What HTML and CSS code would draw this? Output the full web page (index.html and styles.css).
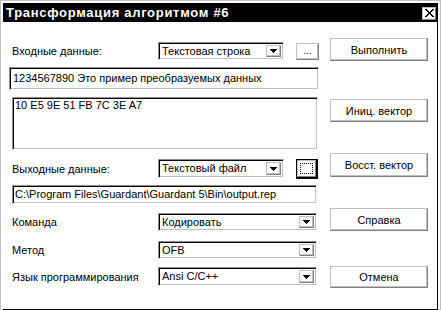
FILE: index.html
```html
<!DOCTYPE html>
<html lang="ru">
<head>
<meta charset="utf-8">
<title>Трансформация алгоритмом #6</title>
<link rel="stylesheet" href="styles.css">
</head>
<body>
<div class="window">
  <div class="frame">
    <div class="titlebar">
      <span class="title">Трансформация алгоритмом #6</span>
      <span class="close"><svg width="9" height="8" viewBox="0 0 9 8"><path d="M0 0h2v1h1v1h1v1h1V2h1V1h1V0h2v1H8v1H7v1H6v2h1v1h1v1h1v1H7V7H6V6H5V5H4v1H3v1H2v1H0V7h1V6h1V5h1V3H2V2H1V1H0z" fill="#000"/></svg></span>
    </div>
    <div class="client">
      <div class="left">
        <div class="row r1">
          <span class="label">Входные данные:</span>
          <div class="combo c-short"><span class="ctext">Текстовая строка</span><span class="arrow"><svg width="7" height="4" viewBox="0 0 7 4"><path d="M0 0h7v1H0zM1 1h5v1H1zM2 2h3v1H2zM3 3h1v1H3z" fill="#000"/></svg></span></div>
          <span class="btn small">...</span>
        </div>
        <div class="field f-in">1234567890 Это пример преобразуемых данных</div>
        <div class="field f-area">10 E5 9E 51 FB 7C 3E A7</div>
        <div class="row r2">
          <span class="label">Выходные данные:</span>
          <div class="combo c-short"><span class="ctext">Текстовый файл</span><span class="arrow"><svg width="7" height="4" viewBox="0 0 7 4"><path d="M0 0h7v1H0zM1 1h5v1H1zM2 2h3v1H2zM3 3h1v1H3z" fill="#000"/></svg></span></div>
          <span class="btn small focus"><span class="dots"></span></span>
        </div>
        <div class="field f-out">C:\Program Files\Guardant\Guardant 5\Bin\output.rep</div>
        <div class="row r3">
          <span class="label">Команда</span>
          <div class="combo c-long"><span class="ctext">Кодировать</span><span class="arrow"><svg width="7" height="4" viewBox="0 0 7 4"><path d="M0 0h7v1H0zM1 1h5v1H1zM2 2h3v1H2zM3 3h1v1H3z" fill="#000"/></svg></span></div>
        </div>
        <div class="row r4">
          <span class="label">Метод</span>
          <div class="combo c-long"><span class="ctext">OFB</span><span class="arrow"><svg width="7" height="4" viewBox="0 0 7 4"><path d="M0 0h7v1H0zM1 1h5v1H1zM2 2h3v1H2zM3 3h1v1H3z" fill="#000"/></svg></span></div>
        </div>
        <div class="row r5">
          <span class="label">Язык программирования</span>
          <div class="combo c-long"><span class="ctext">Ansi C/C++</span><span class="arrow"><svg width="7" height="4" viewBox="0 0 7 4"><path d="M0 0h7v1H0zM1 1h5v1H1zM2 2h3v1H2zM3 3h1v1H3z" fill="#000"/></svg></span></div>
        </div>
      </div>
      <div class="right">
        <span class="btn big b1">Выполнить</span>
        <span class="btn big b2">Иниц. вектор</span>
        <span class="btn big b3">Восст. вектор</span>
        <span class="btn big b4">Справка</span>
        <span class="btn big b5">Отмена</span>
      </div>
    </div>
  </div>
</div>
</body>
</html>
```

FILE: styles.css
```css
* { box-sizing: border-box; }
html, body { margin: 0; padding: 0; background: #fff; }
body {
  font-family: "Liberation Sans", Arial, sans-serif;
  font-size: 11px;
  color: #000;
}
.window {
  width: 441px;
  height: 310px;
  border: 1px solid #c0c0c0;
  padding: 2px 2px 0 2px;
  background: #fff;
}
.frame {
  height: 307px;
  border-right: 1px solid #000;
  border-bottom: 1px solid #000;
  display: flex;
  flex-direction: column;
}
.titlebar {
  height: 19px;
  flex: none;
  background: #000;
  color: #fff;
  display: flex;
  align-items: center;
  justify-content: space-between;
  padding: 0 1px 0 3px;
}
.title {
  font-weight: bold;
  font-size: 13px;
  letter-spacing: 0.7px;
  line-height: 19px;
}
.close {
  width: 14px;
  height: 13px;
  margin-top: 1px;
  background: #fff;
  border: 1px solid;
  border-color: #c0c0c0 #808080 #808080 #c0c0c0;
  display: flex;
  align-items: center;
  justify-content: center;
}
.close svg { display: block; }
.client {
  flex: 1;
  display: flex;
  padding-left: 6px;
}
.left {
  width: 310px;
  padding-top: 20px;
  display: flex;
  flex-direction: column;
}
.right {
  margin-left: 11px;
  width: 98px;
  padding-top: 16px;
  display: flex;
  flex-direction: column;
}
.row {
  display: flex;
  align-items: center;
}
.label {
  width: 149px;
  padding-left: 3px;
  flex: none;
  white-space: nowrap;
}
.r1 { height: 18px; }
.r2 { height: 19px; margin-top: 9px; }
.r3 { height: 18px; margin-top: 9px; }
.r4 { height: 18px; margin-top: 10px; }
.r5 { height: 19px; margin-top: 8px; }

.combo {
  height: 100%;
  border: 1px solid;
  border-color: #909090 #fff #fff #909090;
  box-shadow: inset 1px 1px 0 #000, inset -1px -1px 0 #c0c0c0;
  display: flex;
  align-items: center;
  justify-content: space-between;
  padding: 2px 2px 2px 3px;
  white-space: nowrap;
}
.c-short { width: 126px; }
.c-long { width: 159px; }
.ctext { line-height: 13px; }
.arrow {
  width: 15px;
  height: 100%;
  border: 1px solid;
  border-color: #c0c0c0 #808080 #808080 #c0c0c0;
  box-shadow: inset -1px -1px 0 #c0c0c0;
  display: flex;
  align-items: center;
  justify-content: center;
}
.arrow svg { display: block; }

.btn {
  display: flex;
  align-items: center;
  justify-content: center;
  background: #fff;
  border: 1px solid;
  border-color: #c0c0c0 #808080 #808080 #c0c0c0;
  box-shadow: inset -1px -1px 0 #c0c0c0;
  white-space: nowrap;
}
.small {
  width: 23px;
  height: 17px;
  margin-left: 12px;
  font-size: 10px;
  line-height: 1;
  padding-bottom: 1px;
}
.focus {
  height: 20px;
  width: 22px;
  margin-left: 12px;
  border: 1px solid #000;
  border-right-width: 2px;
  border-bottom-width: 2px;
  box-shadow: inset 1px 1px 0 #c0c0c0, inset -1px -1px 0 #808080;
  padding: 3px;
}
.dots {
  display: block;
  width: 100%;
  height: 100%;
  border: 1px dotted #000;
}
.big {
  width: 98px;
  height: 23px;
}
.b2 { margin-top: 38px; }
.b3 { margin-top: 31px; height: 24px; }
.b4 { margin-top: 31px; }
.b5 { margin-top: 35px; height: 22px; }

.field {
  border: 1px solid;
  border-color: #909090 #fff #fff #909090;
  box-shadow: inset 1px 1px 0 #000, inset -1px -1px 0 #c0c0c0;
  white-space: nowrap;
  overflow: hidden;
}
.f-in {
  width: 310px;
  height: 23px;
  margin-top: 7px;
  padding: 0 3px;
  line-height: 21px;
}
.f-area {
  width: 306px;
  height: 53px;
  margin-top: 7px;
  margin-left: 3px;
  padding: 1px 2px;
  line-height: 13px;
}
.f-out {
  width: 305px;
  height: 19px;
  margin-top: 7px;
  margin-left: 3px;
  padding: 0 2px;
  line-height: 17px;
}
```
